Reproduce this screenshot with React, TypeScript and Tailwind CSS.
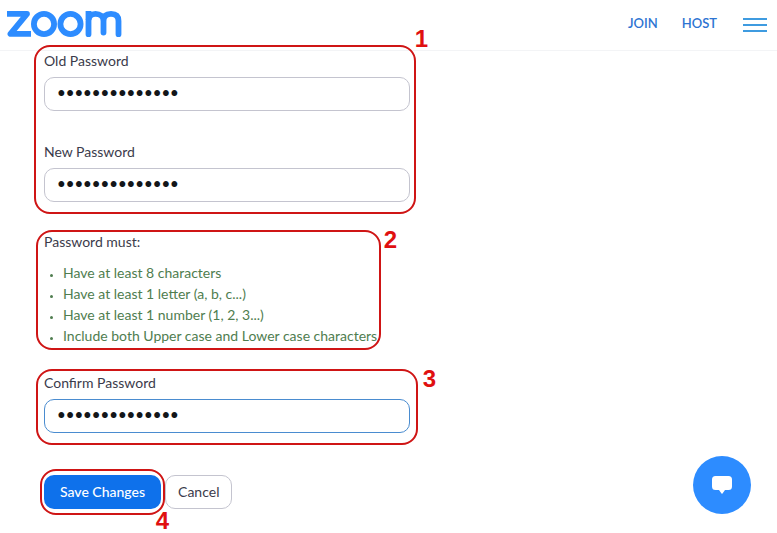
import { useState, type ReactNode } from "react";

function ZoomLogo() {
  return (
    <svg width="116" height="28" viewBox="0 0 116 28" fill="none" stroke="#2d8cff" strokeWidth="5.800" strokeLinejoin="round" aria-label="Zoom" role="img">
      <path d="M1 3.900H21L4.500 23.900H25" />
      <circle cx="38" cy="14" r="10.100" />
      <circle cx="64.500" cy="14" r="10.100" />
      <path d="M82.500 24.200V11C82.500 6.500 85 3.900 89.500 3.900S97.500 6.500 97.500 11V22.500M97.500 11C97.500 6.500 100 3.900 105 3.900S112.500 6.500 112.500 11V24.200" strokeLinecap="round" />
      <path d="M82.500 10V1" />
    </svg>
  );
}

function Header() {
  return (
    <header className="flex h-[51px] items-start justify-between border-b border-gray-100 pl-1.5 pr-2.5 pt-2.5">
      <a href="#">
        <ZoomLogo />
      </a>
      <nav className="flex items-center gap-6 pt-px text-[13px] leading-6 font-semibold text-[#2d74d2]">
        <a href="#">JOIN</a>
        <a href="#">HOST</a>
        <button aria-label="Menu" className="ml-0.5 mt-1">
          <svg width="24" height="16" viewBox="0 0 24 16" stroke="#3f9be0" strokeWidth="2">
            <path d="M0 2H24M0 8H24M0 14H24" />
          </svg>
        </button>
      </nav>
    </header>
  );
}

// red frame laid over a step
function Outline({ className }: { className: string }) {
  return <span className={`pointer-events-none absolute rounded-2xl border-2 border-[#cf1515] ${className}`} />;
}

function StepNumber({ className, children }: { className: string; children: ReactNode }) {
  return (
    <span className={`pointer-events-none absolute font-['Liberation_Sans',sans-serif] text-2xl leading-6 font-bold text-[#e01010] ${className}`}>
      {children}
    </span>
  );
}

function PasswordField({ id, label, active = false }: { id: string; label: string; active?: boolean }) {
  const [value, setValue] = useState("Abcdefgh123456");

  return (
    <div>
      <label htmlFor={id} className="mb-1.5 block">
        {label}
      </label>
      <input
        id={id}
        type="password"
        value={value}
        onChange={(e) => setValue(e.target.value)}
        className={`block h-[34px] w-full rounded-[10px] border bg-white px-3 pb-1 text-[15px] font-medium text-[#131619] outline-none ${active ? "border-[#4a8cd0]" : "border-[#c4c4cf]"}`}
      />
    </div>
  );
}

const rules = [
  "Have at least 8 characters",
  "Have at least 1 letter (a, b, c...)",
  "Have at least 1 number (1, 2, 3...)",
  "Include both Upper case and Lower case characters",
];

export default function App() {
  return (
    <div className="min-h-screen bg-white font-[Lato,sans-serif] text-sm leading-5 text-[#3b3b4b]">
      <Header />

      <form className="ml-11 mr-4 max-w-[366px]" onSubmit={(e) => e.preventDefault()}>
        <section className="relative flex flex-col gap-[31px]">
          <PasswordField id="old-password" label="Old Password" />
          <PasswordField id="new-password" label="New Password" />
          <Outline className="-top-1.5 -right-1.5 -bottom-3 -left-2.5" />
          <StepNumber className="-top-6 -right-4.5">1</StepNumber>
        </section>

        <section className="relative mt-[30px] w-fit">
          <p>Password must:</p>
          <ul className="mt-2.5 list-disc pl-[19px] leading-[21px] text-[#4f7d4f] marker:text-[10px]">
            {rules.map((rule) => (
              <li key={rule}>{rule}</li>
            ))}
          </ul>
          <Outline className="-top-0.5 -right-1 -bottom-1 -left-2" />
          <StepNumber className="-top-1 -right-5">2</StepNumber>
        </section>

        <section className="relative mt-[27px]">
          <PasswordField id="confirm-password" label="Confirm Password" active />
          <Outline className="-top-1 -right-2 -bottom-3 -left-2" />
          <StepNumber className="-top-1.5 -right-6.5">3</StepNumber>
        </section>

        <div className="mt-[42px] flex gap-1">
          <div className="relative">
            <button type="submit" className="h-[34px] rounded-[10px] bg-[#0e71eb] px-4 font-medium text-white">
              Save Changes
            </button>
            <Outline className="-inset-x-1 -top-1.5 -bottom-1.5" />
            <StepNumber className="-right-2 -bottom-6">4</StepNumber>
          </div>
          <button type="button" className="h-[34px] rounded-[10px] border border-[#c4c4cf] px-3">
            Cancel
          </button>
        </div>
      </form>

      <button aria-label="Chat" className="fixed right-[26px] bottom-[19px] flex size-[58px] items-center justify-center rounded-full bg-[#2d8cff]">
        <svg width="20" height="18" viewBox="0 0 20 18" fill="white">
          <path d="M3.500 0H16.500Q20 0 20 3.500V10.500Q20 14 16.500 14H13L10.500 17.500Q10 18 9.500 17.500L7 14H3.500Q0 14 0 10.500V3.500Q0 0 3.500 0Z" />
        </svg>
      </button>
    </div>
  );
}
